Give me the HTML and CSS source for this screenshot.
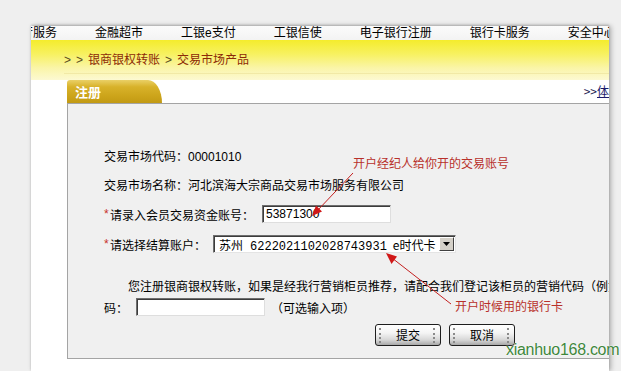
FILE: index.html
```html
<!DOCTYPE html>
<html lang="zh">
<head>
<meta charset="utf-8">
<title>注册</title>
<link rel="stylesheet" href="styles.css">
</head>
<body>
<div class="frame">
  <div class="nav">
    <span class="nav-first">银行服务</span>
    <span>金融超市</span>
    <span>工银e支付</span>
    <span>工银信使</span>
    <span>电子银行注册</span>
    <span>银行卡服务</span>
    <span>安全中心</span>
  </div>
  <div class="banner">
    <div class="crumb">
      <span class="gt">&gt;</span><span class="gt">&gt;</span><span class="lk">银商银权转账</span><span class="gt">&gt;</span><span class="lk">交易市场产品</span>
    </div>
  </div>
  <div class="main">
    <div class="tabrow">
      <div class="tab">注册</div>
      <a class="more">&gt;&gt;<u>体验区</u></a>
    </div>
    <div class="formbox">
      <div class="row r1">交易市场代码：00001010</div>
      <div class="row r2">交易市场名称：河北滨海大宗商品交易市场服务有限公司</div>
      <div class="row r3"><span class="req">*</span>请录入会员交易资金账号：<span class="input w129">53871300</span></div>
      <div class="row r4"><span class="req">*</span>请选择结算账户：<span class="select"><span class="sel-text">苏州<span class="mono">6222021102028743931</span><span class="card">e时代卡</span></span><span class="drop"><svg width="8" height="5" viewBox="0 0 8 5"><path d="M0 0H7L3.5 4Z" fill="#000"/></svg></span></span></div>
      <div class="row para">您注册银商银权转账，如果是经我行营销柜员推荐，请配合我们登记该柜员的营销代码（例如：XXX）</div>
      <div class="row r6">码：<span class="input w129"></span><span class="opt">（可选输入项）</span></div>
      <div class="btns">
        <span class="btn"><span class="grip"></span>提交<span class="grip"></span></span>
        <span class="btn"><span class="grip"></span>取消<span class="grip"></span></span>
      </div>
    </div>
  </div>
</div>
<div class="overlay">
  <span class="note note1">开户经纪人给你开的交易账号</span>
  <span class="note note2">开户时候用的银行卡</span>
  <svg class="arrows" width="621" height="371" viewBox="0 0 621 371">
    <line x1="353" y1="173" x2="317" y2="211" stroke="#c42020" stroke-width="1"/>
    <polygon points="312,216 322,211.5 316,205.5" fill="#d01818"/>
    <line x1="451" y1="304" x2="392" y2="258" stroke="#c42020" stroke-width="1"/>
    <polygon points="386,253 397,256.5 391.5,264" fill="#d01818"/>
  </svg>
  <span class="wm">xianhuo168.com</span>
</div>
</body>
</html>
```

FILE: styles.css
```css
html, body {
  margin: 0;
  padding: 0;
}
body {
  width: 621px;
  height: 371px;
  overflow: hidden;
  background: #efefef;
  position: relative;
  font-family: "Liberation Sans", "Noto Sans CJK SC", sans-serif;
  font-size: 12px;
  color: #000;
}
.frame {
  margin: 26px 0 0 31px;
  width: 578px;
  height: 345px;
  background: #fff;
  overflow: hidden;
  box-shadow: 2px 0 5px rgba(0, 0, 0, 0.28), 0 -1px 2px rgba(0, 0, 0, 0.18);
}
.nav {
  height: 14px;
  display: flex;
  align-items: center;
  gap: 38px;
  white-space: nowrap;
  background: linear-gradient(#fbfbfb, #f3f3f3);
  font-family: "Liberation Sans", "Noto Sans CJK SC", sans-serif;
  font-size: 12px;
  line-height: 14px;
}
.nav span {
  flex: none;
}
.nav-first {
  margin-left: -22px;
}
.banner {
  height: 40px;
  background: linear-gradient(#f4ec2c 0%, #f7f160 35%, #faf5a8 70%, #fcf9d2 100%);
}
.crumb {
  margin-left: 33px;
  padding-top: 13px;
  height: 20px;
  line-height: 14px;
  box-sizing: content-box;
  display: flex;
  gap: 5px;
  border-bottom: 1px solid #f1e9a6;
  font-family: "Liberation Sans", "Noto Sans CJK SC", sans-serif;
  font-size: 12px;
}
.crumb .gt {
  color: #5a4a20;
}
.crumb .lk {
  color: #8c2a06;
}
.main {
  background: #fff;
}
.tabrow {
  margin-left: 36px;
  height: 23px;
  display: flex;
  border-bottom: 1px solid #a4a4a4;
}
.tab {
  width: 95px;
  height: 23px;
  box-sizing: border-box;
  padding: 4px 0 0 8px;
  color: #fff;
  font-family: "Noto Sans CJK SC", sans-serif;
  font-weight: bold;
  font-size: 13px;
  line-height: 15px;
  background: linear-gradient(#ead066 0%, #d8b22a 30%, #cca41a 70%, #c29a14 100%);
  border-radius: 3px 14px 0 0 / 3px 23px 0 0;
}
.more {
  margin-left: auto;
  margin-right: -24px;
  padding-top: 4px;
  line-height: 14px;
  color: #1a1a50;
  font-family: "Noto Sans CJK SC", sans-serif;
  white-space: nowrap;
}
.more u {
  color: #1a1a6a;
}
.formbox {
  margin-left: 36px;
  margin-right: -4px;
  background: #f0f0f0;
  border-left: 1px solid #a4a4a4;
  border-bottom: 1px solid #a4a4a4;
  padding: 41px 0 0 36px;
  box-sizing: border-box;
  height: 255px;
  font-family: "Liberation Sans", "Noto Sans CJK SC", sans-serif;
}
.row {
  height: 20px;
  display: flex;
  align-items: center;
  white-space: nowrap;
}
.r2 { margin-top: 9px; }
.r3 { margin-top: 10px; }
.r4 { margin-top: 10px; }
.para {
  margin-top: 21px;
  padding-left: 24px;
}
.r6 { margin-top: 2px; }
.req {
  color: #c8302a;
  width: 6px;
}
.input {
  margin-left: 8px;
  height: 18px;
  box-sizing: border-box;
  background: #fff;
  border: 1px solid;
  border-color: #6e6e6e #dedede #dedede #6e6e6e;
  box-shadow: inset 1px 1px 0 #3c3c3c;
  padding: 1px 0 0 3px;
  line-height: 14px;
  font-size: 12px;
}
.w129 { width: 129px; }
.select {
  margin-left: 7px;
  width: 243px;
  height: 18px;
  box-sizing: border-box;
  background: #fff;
  border: 1px solid;
  border-color: #6e6e6e #e4e4e4 #e4e4e4 #6e6e6e;
  box-shadow: inset 1px 1px 0 #3c3c3c;
  display: flex;
  align-items: stretch;
  padding: 1px 1px 0 1px;
}
.sel-text {
  flex: 1;
  padding-left: 4px;
  line-height: 15px;
  font-family: "Noto Sans CJK SC", sans-serif;
  font-size: 12px;
  white-space: nowrap;
}
.mono {
  margin-left: 7px;
  font-family: "Liberation Mono", monospace;
  font-size: 12px;
}
.card {
  margin-left: 6px;
}
.drop {
  width: 15px;
  background: #d4d0c8;
  border: 1px solid;
  border-color: #fff #404040 #404040 #fff;
  box-sizing: border-box;
  display: flex;
  align-items: center;
  justify-content: center;
  margin-bottom: 1px;
}
.opt {
  margin-left: 6px;
  font-family: "Noto Sans CJK SC", sans-serif;
}
.btns {
  margin-top: 7px;
  padding-left: 271px;
  display: flex;
  gap: 8px;
}
.btn {
  width: 66px;
  height: 22px;
  box-sizing: border-box;
  border: 1px solid #1e1e1e;
  border-radius: 3px;
  background: linear-gradient(#ffffff 0%, #f4f4f4 40%, #d6d6d6 75%, #a8a8a8 100%);
  display: flex;
  align-items: center;
  justify-content: space-between;
  padding: 0 3px;
  font-family: "Noto Sans CJK SC", sans-serif;
  font-size: 12px;
  line-height: 14px;
}
.grip {
  width: 2px;
  height: 15px;
  border-left: 2px dotted #8a8a8a;
}
.overlay {
  position: absolute;
  left: 0;
  top: 0;
  width: 621px;
  height: 371px;
  pointer-events: none;
}
.arrows {
  position: absolute;
  left: 0;
  top: 0;
}
.note {
  position: absolute;
  color: #b8302a;
  font-family: "Noto Sans CJK SC", sans-serif;
  font-size: 12px;
  line-height: 14px;
  white-space: nowrap;
}
.note1 { left: 353px; top: 156px; }
.note2 { left: 455px; top: 299px; }
.wm {
  position: absolute;
  left: 506px;
  top: 341px;
  color: #3f873c;
  font-family: "Liberation Sans", sans-serif;
  font-size: 16px;
  line-height: 18px;
  letter-spacing: -0.3px;
  text-shadow: 0 0 2px #fff, 0 0 1px #fff;
}
```
